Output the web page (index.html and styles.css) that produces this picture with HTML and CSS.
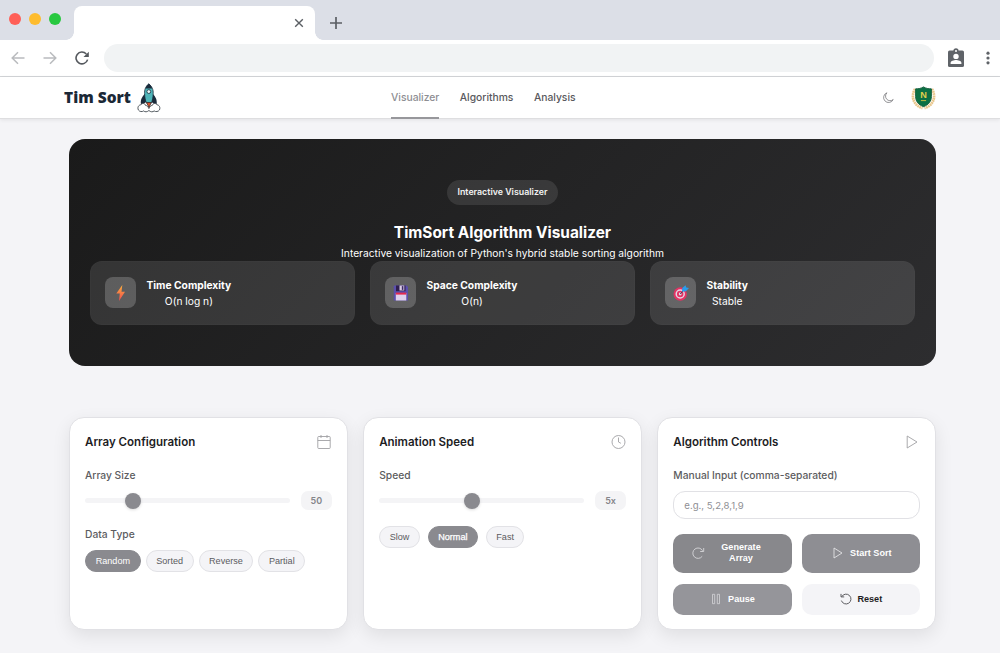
FILE: index.html
```html
<!DOCTYPE html>
<html lang="en">
<head>
<meta charset="utf-8">
<title>TimSort Algorithm Visualizer</title>
<link rel="stylesheet" href="styles.css">
</head>
<body>
<div class="tabstrip">
  <div class="lights"><i class="red"></i><i class="amber"></i><i class="green"></i></div>
  <div class="tab">
    <svg width="10" height="10" viewBox="0 0 10 10" fill="none" stroke="#5b5f64" stroke-width="1.4"><path d="M1.200 1.200l7.600 7.600M8.800 1.200L1.200 8.800"/></svg>
  </div>
  <svg class="newtab" width="14" height="14" viewBox="0 0 14 14" fill="none" stroke="#5b5f64" stroke-width="1.700"><path d="M7 1v12M1 7h12"/></svg>
</div>
<div class="toolbar">
  <svg class="back" width="14" height="14" viewBox="0 0 14 14" fill="none" stroke="#b9bbbe" stroke-width="1.500"><path d="M13.500 7H1.500M7 1.200L1.200 7L7 12.800"/></svg>
  <svg class="fwd" width="14" height="14" viewBox="0 0 14 14" fill="none" stroke="#b9bbbe" stroke-width="1.500"><path d="M.5 7h12M7 1.200L12.800 7L7 12.800"/></svg>
  <svg class="reload" width="14" height="14" viewBox="0 0 14 14"><path d="M12.600 8.600A5.900 5.900 0 1 1 11.300 3" fill="none" stroke="#55595e" stroke-width="1.600"/><path d="M13.800.8v5.300H8.500z" fill="#55595e"/></svg>
  <div class="address"></div>
  <svg class="badge" width="16" height="20" viewBox="0 0 16 20"><rect x="0" y="2.600" width="16" height="16.400" rx="1.600" fill="#5f6368"/><circle cx="8" cy="2.900" r="2.600" fill="#5f6368"/><circle cx="8" cy="2.900" r="1" fill="#fff"/><circle cx="8" cy="8.400" r="2.700" fill="#fff"/><path d="M2.600 16v-1.300c0-1.900 3.500-2.800 5.400-2.800s5.400.9 5.400 2.800V16z" fill="#fff"/></svg>
  <svg class="dots" width="4" height="14" viewBox="0 0 4 14" fill="#5f6368"><circle cx="2" cy="2.200" r="1.600"/><circle cx="2" cy="7" r="1.600"/><circle cx="2" cy="11.800" r="1.600"/></svg>
</div>
<header class="site">
  <div class="brand"><span>Tim Sort</span>
    <svg width="24" height="30" viewBox="0 0 24 30">
      <path d="M7.800 11C5 14 3.600 16 3.800 20.500L5 22l4-3V11zM15.800 11c2.800 3 4.200 5 4 9.500L18.600 22l-4-3V11z" fill="#1b2b3b"/>
      <path d="M11.800 .8C8.300 3.800 7.400 7 7.600 10.500c.1 4 .8 7 1.800 9.500h5c1-2.500 1.700-5.500 1.800-9.500.2-3.500-.9-6.700-4.400-9.700z" fill="#4fb5b9" stroke="#1b2b3b" stroke-width=".8"/>
      <path d="M11.800.8C10 2.200 9 3.700 8.300 5.500h7C14.600 3.700 13.600 2.200 11.800.8z" fill="#1b2b3b"/>
      <circle cx="11.800" cy="8.600" r="1.900" fill="#e9f8f7" stroke="#1b2b3b" stroke-width=".8"/>
      <path d="M11.900 27.500c-1.700 1.600-4 1.700-5.200.4-1.700 1.200-4.200.8-5.300-.9-1.200-2.500.1-5 2.400-5.200 1.200-2 4.200-1.700 4.700.6 1.700 0 2.800 1.800 3.400 3.200.6-1.400 1.700-3.200 3.400-3.200.5-2.300 3.500-2.600 4.700-.6 2.300.2 3.600 2.700 2.400 5.200-1.100 1.700-3.600 2.100-5.300.9-1.200 1.300-3.500 1.200-5.200-.4z" fill="#fff" stroke="#3f474e" stroke-width=".9"/>
      <path d="M9.500 19.500h4.800L12 24.500z" fill="#d8532d" stroke="#402d2c" stroke-width=".8"/>
    </svg>
  </div>
  <nav><a class="on">Visualizer</a><a>Algorithms</a><a>Analysis</a></nav>
  <div class="right">
    <svg width="12" height="12" viewBox="0 0 12 12" fill="none" stroke="#7a7a7e" stroke-width=".8"><path d="M5 .8A5 5 0 1 0 11.200 7.500A4.500 4.500 0 0 1 5 .8z"/></svg>
    <svg width="25" height="26" viewBox="0 0 26 26">
      <g fill="none" stroke="#e9c68b" stroke-width="2.800" stroke-dasharray="1.900 .5"><path d="M4.200 3.500C-.3 11 2 20.500 12 23.500M21.800 3.500C26.300 11 24 20.500 14 23.500"/></g>
      <path d="M13 1.500c2.500 1.500 5 2 8.200 2v8c0 5-3 8.500-8.200 10.500-5.200-2-8.200-5.500-8.200-10.500v-8c3.200 0 5.700-.5 8.200-2z" fill="#0b7044" stroke="#155f3d" stroke-width="1"/>
      <text x="13" y="13.500" class="crest">N</text><path d="M10.300 15.700h5.400" stroke="#c4bd43" stroke-width="1"/>
    </svg>
  </div>
</header>
<main>
  <section class="hero">
    <div class="pill"><span>Interactive Visualizer</span></div>
    <h1>TimSort Algorithm Visualizer</h1>
    <p class="lead">Interactive visualization of Python's hybrid stable sorting algorithm</p>
    <div class="stats">
      <div class="stat"><div class="tile"><svg width="16" height="18" viewBox="0 0 16 18"><defs><linearGradient id="bolt" x1="0" y1="0" x2="0" y2="1"><stop offset="0" stop-color="#fbb13c"/><stop offset="1" stop-color="#f04a50"/></linearGradient></defs><path d="M9.300 1L3.300 9.600h3.500L6 17l6-9.300H8.500z" fill="url(#bolt)"/></svg></div><div class="info"><b>Time Complexity</b><span>O(n log n)</span></div></div>
      <div class="stat"><div class="tile"><svg width="16" height="16" viewBox="0 0 16 16"><path d="M1.500.5h12l1.500 1.500v13.500H.8V1.200z" fill="#5b4fae"/><path d="M3 .5h9.500v5.700H3z" fill="#2e1e4f"/><path d="M6.500 .5h4.800v5H6.500z" fill="#dacde6"/><path d="M8.800 1.100h1.600v3.800H8.800z" fill="#3e2c67"/><path d="M2.800 8h10.500v7.500H2.800z" fill="#dfd0ec"/><path d="M2.800 7.600h10.500v2H2.800z" fill="#e5294e"/></svg></div><div class="info"><b>Space Complexity</b><span>O(n)</span></div></div>
      <div class="stat"><div class="tile"><svg width="16" height="16" viewBox="0 0 16 16"><circle cx="7.200" cy="9" r="6.700" fill="#e33364"/><circle cx="7.200" cy="9" r="4" fill="none" stroke="#e5d4e4" stroke-width="1.500"/><circle cx="7.200" cy="9" r="1.400" fill="#e5d4e4"/><path d="M7.200 9l4.500-4.500" stroke="#353d55" stroke-width="1"/><path d="M9 6.400l.3-3.400L12.500.2l.8 2.200 2.700.7-3 3.200-3 .2z" fill="#289cec"/></svg></div><div class="info"><b>Stability</b><span>Stable</span></div></div>
    </div>
  </section>
  <section class="cards">
    <div class="card">
      <div class="head"><h2>Array Configuration</h2><svg width="16" height="16" viewBox="0 0 16 16" fill="none" stroke="#a0a0a4" stroke-width=".9"><rect x="1.800" y="2.500" width="12.400" height="12" rx=".8"/><path d="M1.800 6.500h12.400M5 1v3M11 1v3"/></svg></div>
      <label>Array Size</label>
      <div class="slider"><div class="track"><i style="left:39.500px"></i></div><output>50</output></div>
      <label class="second">Data Type</label>
      <div class="chips"><button class="active">Random</button><button>Sorted</button><button>Reverse</button><button>Partial</button></div>
    </div>
    <div class="card">
      <div class="head"><h2>Animation Speed</h2><svg width="16" height="16" viewBox="0 0 16 16" fill="none" stroke="#a0a0a4" stroke-width=".9"><circle cx="8.500" cy="8" r="6.500"/><path d="M8.500 3.500V8l2.400 1.300"/></svg></div>
      <label>Speed</label>
      <div class="slider"><div class="track"><i style="left:84.500px"></i></div><output>5x</output></div>
      <div class="chips speed"><button>Slow</button><button class="active strong">Normal</button><button>Fast</button></div>
    </div>
    <div class="card">
      <div class="head"><h2>Algorithm Controls</h2><svg width="16" height="16" viewBox="0 0 16 16" fill="none" stroke="#a0a0a4" stroke-width=".9"><path d="M3.200 2v12l9.800-6z"/></svg></div>
      <label>Manual Input (comma-separated)</label>
      <input type="text" placeholder="e.g., 5,2,8,1,9">
      <div class="actions">
        <button class="gen"><svg width="14" height="14" viewBox="0 0 14 14" fill="none" stroke="#d6d6d9" stroke-width=".9"><path d="M11.200 10.300A5.200 5.200 0 1 1 11.600 4.700M12.700 2v3.500H9.200"/></svg><span>Generate Array</span></button>
        <button class="start"><svg width="12" height="14" viewBox="0 0 12 14" fill="none" stroke="#e2e2e4" stroke-width=".9"><path d="M2 2v10l8-5z"/></svg><span>Start Sort</span></button>
        <button class="pause"><svg width="10" height="12" viewBox="0 0 10 12" fill="none" stroke="#d6d6d9" stroke-width=".8"><path d="M1.500 1.300h2.200v9.400H1.500zM6.300 1.300h2.200v9.400H6.300z"/></svg><span>Pause</span></button>
        <button class="reset"><svg width="12" height="12" viewBox="0 0 12 12" fill="none" stroke="#4b4b4f" stroke-width=".9"><path d="M1.800 3.600A4.900 4.900 0 1 1 1.400 7.600M1 .9v3h3.200"/></svg><span>Reset</span></button>
      </div>
    </div>
  </section>
</main>
</body>
</html>
```
FILE: styles.css
```css
* { box-sizing: border-box; }
body { margin: 0; background: #fff; font-family: Inter, sans-serif; color: #1d1d1f; overflow: hidden; }
svg { display: block; flex: none; }
button, input { font-family: "Liberation Sans", Arial, sans-serif; margin: 0; }

.tabstrip { height: 40px; background: #dcdfe7; display: flex; align-items: flex-start; }
.lights { display: flex; gap: 8px; padding: 13px 13px 0 9px; }
.lights i { width: 12px; height: 12px; border-radius: 50%; }
.red { background: #ff5f57; }
.amber { background: #febc2e; }
.green { background: #28c840; }
.tab { width: 240.500px; height: 34px; margin-top: 6px; background: #fff; border-radius: 8px 8px 0 0; display: flex; justify-content: flex-end; align-items: center; padding-right: 11px; position: relative; }
.tab::before, .tab::after { content: ""; position: absolute; bottom: 0; width: 8px; height: 8px; }
.tab::before { left: -8px; background: radial-gradient(circle at 0 0, transparent 7.500px, #fff 8px); }
.tab::after { right: -8px; background: radial-gradient(circle at 100% 0, transparent 7.500px, #fff 8px); }
.newtab { margin: 16px 0 0 14.500px; }

.toolbar { height: 37px; border-bottom: 1px solid #d3d5d8; display: flex; align-items: center; }
.back { margin-left: 11px; }
.fwd { margin-left: 18px; }
.reload { margin-left: 18px; }
.address { width: 830px; height: 28px; margin-left: 15px; background: #f1f3f4; border-radius: 14px; }
.badge { margin-left: 14px; }
.dots { margin-left: 22px; }

.site { height: 42px; background: #fff; border-bottom: 1px solid #dedee0; display: flex; padding: 0 64px; box-shadow: 0 1px 4px rgba(0,0,0,.08); position: relative; justify-content: space-between; }
.brand { display: flex; align-items: center; gap: 6px; width: 327px; height: 41px; font: 800 15.500px "Open Sans", sans-serif; color: #1b2836; }
.brand span { padding-bottom: 1px; }
nav { display: flex; gap: 20.500px; flex: 1; font-size: 10.300px; font-weight: 500; color: #59595d; }
nav a { display: flex; align-items: center; height: 42px; padding-bottom: 2.500px; position: relative; }
nav .on { color: #8e8e93; }
nav .on::after { content: ""; position: absolute; left: 0; right: 0; bottom: 0; height: 2px; background: #97979b; }
.right { display: flex; align-items: center; gap: 17px; height: 41px; }
.crest { font: 700 9.500px "Liberation Sans", sans-serif; fill: #e0cf4c; text-anchor: middle; }

main { height: 534px; background: #f4f4f7; padding: 20px 64px 0 69px; }
.hero { height: 226.500px; border-radius: 16px; background: linear-gradient(135deg, #1a1a1a, #2d2d2f); color: #fff; padding: 41px 21px 0; text-align: center; }
.pill { width: 111px; height: 24.500px; margin: 0 auto; border-radius: 13px; background: rgba(255,255,255,.1); display: flex; align-items: center; justify-content: center; font-size: 8.850px; font-weight: 600; color: #f2f2f2; }
.pill span { padding-bottom: 1px; }
h1 { margin: 18px 0 0; font-size: 15.400px; line-height: 20px; font-weight: 700; }
.lead { margin: 0; padding-top: 2px; font-size: 10.250px; line-height: 16.500px; }
.stats { display: grid; grid-template-columns: repeat(3, 1fr); gap: 15px; }
.stat { height: 63.500px; border-radius: 12px; background: rgba(255,255,255,.11); border: 1px solid rgba(255,255,255,.015); display: flex; align-items: center; gap: 10.500px; padding: 0 14px; }
.tile { width: 31px; height: 31px; border-radius: 8px; background: rgba(255,255,255,.2); display: flex; align-items: center; justify-content: center; }
.info { display: flex; flex-direction: column; align-items: center; font-size: 10.250px; line-height: 16px; }
.info b { font-weight: 700; }

.cards { display: grid; grid-template-columns: repeat(3, 1fr); gap: 15.500px; margin-top: 51.500px; }
.card { height: 212.500px; background: #fff; border: 1px solid #e1e1e5; border-radius: 15px; padding: 14px 15px 0; box-shadow: 0 6px 18px rgba(0,0,0,.085); }
.head { display: flex; justify-content: space-between; align-items: center; height: 21px; }
.head svg { margin-bottom: 1px; }
h2 { margin: 0; padding-bottom: 1px; font-size: 11.520px; font-weight: 600; }
label { display: block; margin-top: 14px; font-size: 10.280px; line-height: 17px; font-weight: 500; color: #5c5c60; }
.slider { display: flex; align-items: center; gap: 11px; margin-top: 6.500px; height: 20px; }
.track { flex: 1; height: 5.500px; border-radius: 3px; background: #f4f4f6; position: relative; }
.track i { position: absolute; top: -5.250px; width: 16px; height: 16px; border-radius: 50%; background: #8a8a8f; box-shadow: 0 1px 3px rgba(0,0,0,.15); }
output { width: 30.500px; height: 19px; border-radius: 7px; background: #f4f4f6; color: #85858a; font-size: 9px; font-weight: 600; display: flex; align-items: center; justify-content: center; }
.second { margin-top: 15.500px; }
.chips { display: flex; gap: 5px; margin-top: 7px; }
.chips button { height: 22px; border: 1px solid #e2e2e6; border-radius: 11px; background: #f4f4f7; color: #5b5b60; font-size: 9.100px; font-weight: 400; padding: 0 9.500px; white-space: nowrap; }
.chips button.active { background: #8a8a8f; border-color: #8a8a8f; color: #fff; padding: 0 9.700px; }
.chips button.strong { -webkit-text-stroke: .25px #fff; padding: 0 9.300px; }
.speed { gap: 8px; margin-top: 15.500px; }

input { display: block; width: 100%; height: 28px; margin-top: 6.500px; border: 1px solid #e1e1e5; border-radius: 12px; padding: 1px 10px 0; font: 400 9.600px Inter, sans-serif; background: #fff; }
input::placeholder { color: #8f8f94; opacity: 1; }
.actions { display: grid; grid-template-columns: 1fr 1fr; grid-template-rows: 39.500px 31px; gap: 10.500px 10px; margin-top: 15px; }
.actions button { border: 0; border-radius: 10px; display: flex; align-items: center; justify-content: center; gap: 7px; font-size: 9.100px; line-height: 11px; font-weight: 700; color: #fff; padding: 0; background: #8e8e93; }
.actions .gen { background: #88888c; gap: 9px; padding-right: 6px; }
.gen span { width: 54px; }
.actions .start { gap: 6px; padding-left: 2px; }
.actions .pause { background: #95959a; padding-left: 1px; }
.actions .reset { background: #f4f4f7; color: #1d1d1f; gap: 5px; padding-left: 1px; }
```
